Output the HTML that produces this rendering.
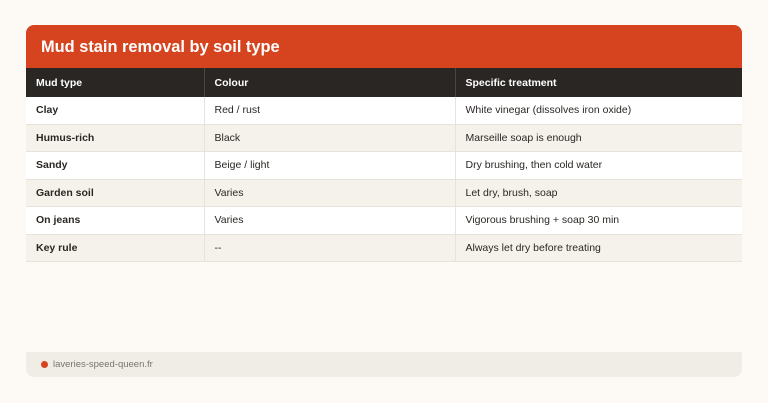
<!DOCTYPE html>
<html><head><meta charset="utf-8"><style>
body{margin:0;width:768px;height:403px;background:#fdfaf6;font-family:"Liberation Sans",sans-serif;position:relative;overflow:hidden}
.title{position:absolute;left:26px;top:25px;width:716px;height:43px;background:#d6441f;border-radius:8px 8px 0 0;color:#fff;font-weight:bold;font-size:16.4px;line-height:44px;box-sizing:border-box;padding-left:15px}
table{position:absolute;left:26px;top:68px;width:716px;border-collapse:collapse;font-size:10.5px;color:#2a2724}
th{background:#2a2623;color:#fff;font-weight:bold;text-align:left;height:29px;padding:0 10px;border-left:1px solid #4a4642}
td{height:26.5px;padding:0 10px;border-bottom:1px solid #e6e2dc;border-left:1px solid #e6e2dc}
th:first-child,td:first-child{border-left:none}
td:first-child{font-weight:bold}
.o td{background:#f5f2ec}
.e td{background:#fff}
.foot{position:absolute;left:26px;top:352px;width:716px;height:25px;background:#f0ede7;border-radius:0 0 8px 8px;font-size:9.5px;color:#7a746d;line-height:25px}
.foot span.d{position:absolute;left:15px;top:9px;width:7px;height:7px;border-radius:50%;background:#d6441f}
.foot span.t{position:absolute;left:27px}
</style></head><body>
<div class="title">Mud stain removal by soil type</div>
<table>
<colgroup><col style="width:178px"><col style="width:251px"><col></colgroup>
<thead><tr><th>Mud type</th><th>Colour</th><th>Specific treatment</th></tr></thead>
<tbody>
<tr class="e"><td>Clay</td><td>Red / rust</td><td>White vinegar (dissolves iron oxide)</td></tr>
<tr class="o"><td>Humus-rich</td><td>Black</td><td>Marseille soap is enough</td></tr>
<tr class="e"><td>Sandy</td><td>Beige / light</td><td>Dry brushing, then cold water</td></tr>
<tr class="o"><td>Garden soil</td><td>Varies</td><td>Let dry, brush, soap</td></tr>
<tr class="e"><td>On jeans</td><td>Varies</td><td>Vigorous brushing + soap 30 min</td></tr>
<tr class="o"><td>Key rule</td><td>--</td><td>Always let dry before treating</td></tr>
</tbody></table>
<div class="foot"><span class="d"></span><span class="t">laveries-speed-queen.fr</span></div>
</body></html>
